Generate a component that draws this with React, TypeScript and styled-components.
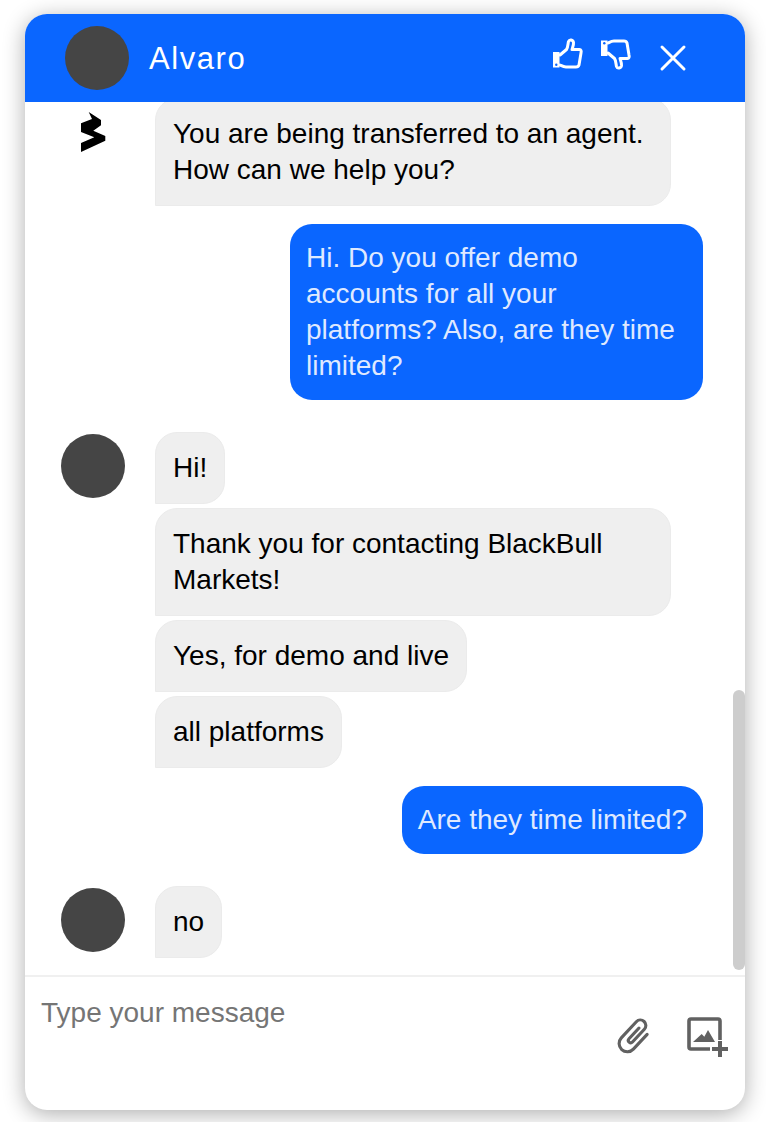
import React from 'react';
import styled, { createGlobalStyle } from 'styled-components';

const GlobalStyle = createGlobalStyle`
  html, body {
    margin: 0;
    padding: 0;
    background: #fff;
  }
  body {
    font-family: "Liberation Sans", Arial, sans-serif;
  }
  * {
    box-sizing: border-box;
  }
`;

const Page = styled.div`
  width: 766px;
  height: 1122px;
  padding: 14px 21px 12px 25px;
  overflow: hidden;
`;

const Card = styled.div`
  position: relative;
  width: 720px;
  height: 1096px;
  display: flex;
  flex-direction: column;
  border-radius: 22px;
  background: #fff;
  box-shadow: 0 4px 22px rgba(0, 0, 0, 0.32);
  overflow: hidden;
`;

const Header = styled.header`
  flex: none;
  height: 88px;
  display: flex;
  align-items: center;
  padding: 0 58px 0 40px;
  background: #0a66ff;
  color: #fff;
`;

const Avatar = styled.div`
  flex: none;
  width: 64px;
  height: 64px;
  border-radius: 50%;
  background: #454545;
`;

const SenderAvatar = styled(Avatar)`
  margin-top: 2px;
`;

const Name = styled.div`
  flex: 1;
  margin-left: 20px;
  padding-top: 2px;
  font-size: 31px;
  letter-spacing: 1.55px;
`;

const HeaderIcons = styled.div`
  display: flex;
  align-items: center;
`;

const ThumbIcon = styled.svg`
  display: block;
  margin: 0 14px 8px 0;
`;

const CloseIcon = styled.svg`
  display: block;
  margin-left: 11px;
`;

const Messages = styled.main`
  flex: 1;
  min-height: 0;
  display: flex;
  flex-direction: column;
  justify-content: flex-end;
  overflow: hidden;
  padding: 0 42px 17px 36px;
`;

const Group = styled.div<{ $top?: number }>`
  flex: none;
  display: flex;
  margin-top: ${({ $top = 0 }) => $top}px;
`;

const AvatarSlot = styled.div`
  flex: none;
  width: 64px;
  margin-right: 30px;
  display: flex;
  justify-content: center;
  align-items: flex-start;
`;

const Bubbles = styled.div`
  display: flex;
  flex-direction: column;
  align-items: flex-start;
  gap: 4px;
`;

const Incoming = styled.div`
  max-width: 516px;
  padding: 17px;
  font-size: 28px;
  line-height: 36px;
  color: #000;
  background: #efefef;
  border: 1px solid #ebebeb;
  border-radius: 22px 22px 22px 0;
`;

const OutgoingRow = styled.div`
  flex: none;
  display: flex;
  justify-content: flex-end;
  margin-top: 18px;
`;

const Outgoing = styled.div`
  max-width: 413px;
  padding: 16px;
  font-size: 28px;
  line-height: 36px;
  color: #dfe9ff;
  background: #0a66ff;
  border-radius: 22px;
`;

const Composer = styled.footer`
  flex: none;
  height: 135px;
  display: flex;
  justify-content: space-between;
  padding: 19px 15px 0 16px;
  border-top: 2px solid #f0f0f0;
`;

const Placeholder = styled.div`
  font-size: 28px;
  line-height: 34px;
  color: #757575;
`;

const ComposerIcons = styled.div`
  display: flex;
  align-items: flex-start;
  gap: 31px;
  padding-top: 18px;
`;

const ClipIcon = styled.svg`
  display: block;
`;

const ImageIcon = styled.svg`
  display: block;
  margin-top: 2px;
`;

const Scrollbar = styled.div`
  position: absolute;
  top: 676px;
  right: 0;
  width: 12px;
  height: 280px;
  border-radius: 6px;
  background: #cdcdcd;
`;

const thumbPath =
  'M8 18l6.500-5.500C16 10.500 16 6 16.500 4.500 17.500 2 21 2.500 21.500 5.500 21.800 8 20.500 10.500 20 12.500h7.500c1.500 0 2 1.500 1.500 3.500l-2 12c-.5 1.500-1.500 2-3 2H14c-2.500 0-4-1-6-2';

const ThumbShape = () => (
  <>
    <path d={thumbPath} stroke="#fff" strokeWidth="3" strokeLinejoin="round" strokeLinecap="round" fill="none" />
    <rect x="1" y="15" width="6.500" height="15.500" fill="#fff" />
    <circle cx="4.300" cy="27.800" r="1.200" fill="#0a66ff" />
  </>
);

const ThumbUp = () => (
  <ThumbIcon width="34" height="34" viewBox="0 0 34 34">
    <ThumbShape />
  </ThumbIcon>
);

const ThumbDown = () => (
  <ThumbIcon width="34" height="34" viewBox="0 0 34 34">
    <g transform="translate(0 34) scale(1 -1)">
      <ThumbShape />
    </g>
  </ThumbIcon>
);

const Close = () => (
  <CloseIcon width="28" height="28" viewBox="0 0 28 28" fill="none" stroke="#fff" strokeWidth="3" strokeLinecap="round">
    <path d="M3 3l22 22M25 3L3 25" />
  </CloseIcon>
);

const LogoIcon = styled.svg`
  display: block;
  margin-top: 14px;
`;

const Logo = () => (
  <LogoIcon width="25" height="40" viewBox="0 0 25 40">
    <path d="M7.700 0L20 8v5.300l-7.700 5.400L24.300 24v4.700L0 40v-9l13.300-5.700L0 20v-8.700L11 7z" fill="#000" />
  </LogoIcon>
);

const Clip = () => (
  <ClipIcon width="44" height="44" viewBox="0 0 24 24" fill="none" stroke="#616161" strokeWidth="1.700" strokeLinecap="round">
    <path transform="rotate(43 12.500 12.250)" d="M17 6.500v11a4.500 4.500 0 0 1-9 0v-12a3 3 0 0 1 6 0V15a1.300 1.300 0 0 1-2.600 0V7" />
  </ClipIcon>
);

const ImagePlus = () => (
  <ImageIcon width="44" height="42" viewBox="0 0 44 42" fill="none">
    <path d="M24 33H5a2 2 0 0 1-2-2V5a2 2 0 0 1 2-2h27a2 2 0 0 1 2 2v19" stroke="#616161" strokeWidth="3.600" />
    <path d="M7 26l8.700-8 2.600 2.700L22 14l7 12z" fill="#616161" />
    <path d="M34 25v16M26 33h16" stroke="#616161" strokeWidth="4" />
  </ImageIcon>
);

export default function App() {
  return (
    <Page>
      <GlobalStyle />
      <Card>
        <Header>
          <Avatar />
          <Name>Alvaro</Name>
          <HeaderIcons>
            <ThumbUp />
            <ThumbDown />
            <Close />
          </HeaderIcons>
        </Header>
        <Messages>
          <Group>
            <AvatarSlot>
              <Logo />
            </AvatarSlot>
            <Bubbles>
              <Incoming>You are being transferred to an agent. How can we help you?</Incoming>
            </Bubbles>
          </Group>
          <OutgoingRow>
            <Outgoing>Hi. Do you offer demo accounts for all your platforms? Also, are they time limited?</Outgoing>
          </OutgoingRow>
          <Group $top={32}>
            <AvatarSlot>
              <SenderAvatar />
            </AvatarSlot>
            <Bubbles>
              <Incoming>Hi!</Incoming>
              <Incoming>Thank you for contacting BlackBull Markets!</Incoming>
              <Incoming>Yes, for demo and live</Incoming>
              <Incoming>all platforms</Incoming>
            </Bubbles>
          </Group>
          <OutgoingRow>
            <Outgoing>Are they time limited?</Outgoing>
          </OutgoingRow>
          <Group $top={32}>
            <AvatarSlot>
              <SenderAvatar />
            </AvatarSlot>
            <Bubbles>
              <Incoming>no</Incoming>
            </Bubbles>
          </Group>
        </Messages>
        <Composer>
          <Placeholder>Type your message</Placeholder>
          <ComposerIcons>
            <Clip />
            <ImagePlus />
          </ComposerIcons>
        </Composer>
        <Scrollbar />
      </Card>
    </Page>
  );
}
